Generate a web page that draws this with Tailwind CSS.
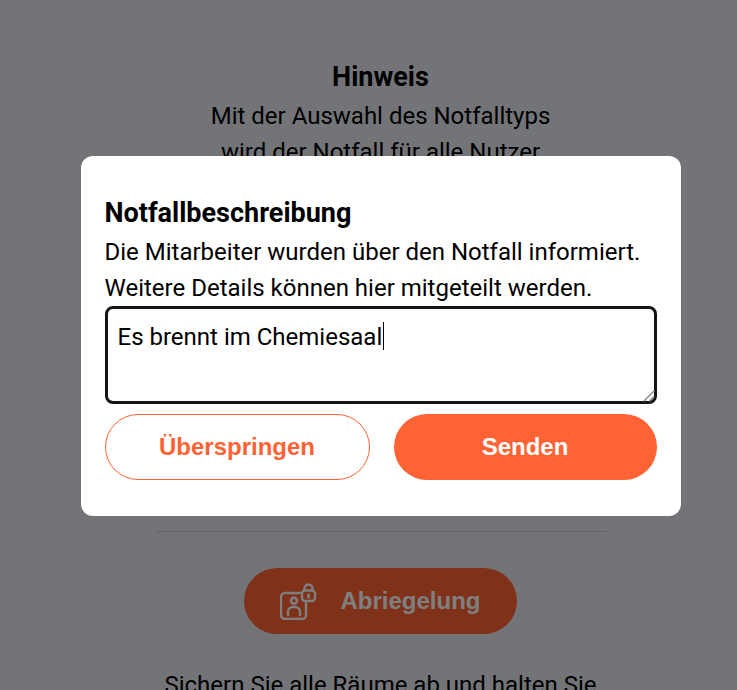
<!DOCTYPE html>
<html lang="de">
<head>
<meta charset="utf-8">
<script src="https://cdn.jsdelivr.net/npm/@tailwindcss/browser@4"></script>
</head>
<body class="m-0 bg-[#e6e9ee] font-['Roboto',sans-serif] text-black">
<div class="relative h-[690px] w-[737px] overflow-hidden">
  <main class="flex w-[761px] flex-col items-center pt-[59px] text-center">
    <h2 class="text-[27px] leading-[36px] font-bold">Hinweis</h2>
    <p class="mt-[3px] text-[24px] leading-[36px]">Mit der Auswahl des Notfalltyps</p>
    <p class="text-[24px] leading-[36px]">wird der Notfall für alle Nutzer</p>
    <div class="mt-[361px] h-px w-[450px] bg-[#c8c8c8]"></div>
    <button class="mt-[36px] flex h-[66px] w-[273px] items-center justify-center gap-[23px] rounded-full bg-[#ff6233] font-['Liberation_Sans',sans-serif] text-[24px] font-bold text-white">
      <svg class="h-[37px] w-[37px]" viewBox="0 0 37 37" fill="none" stroke="currentColor" stroke-width="2.4" stroke-linecap="round" stroke-linejoin="round">
        <path d="M20 10H5a4 4 0 0 0-4 4v18a4 4 0 0 0 4 4h17a4 4 0 0 0 4-4V20"/>
        <circle cx="14" cy="17.7" r="3"/>
        <path d="M8 32v-3a5 5 0 0 1 5-5h2a5 5 0 0 1 5 5v3"/>
        <rect x="22" y="7.5" width="13" height="10.5" rx="3"/>
        <path d="M24.5 7.5V5.5a4 4 0 0 1 8 0v2"/>
        <circle cx="28.5" cy="12" r="1.3" fill="currentColor" stroke="none"/>
        <path d="M28.5 12v2.6"/>
      </svg>
      <span>Abriegelung</span>
    </button>
    <p class="mt-[33px] text-[24px] leading-[36px] whitespace-nowrap">Sichern Sie alle Räume ab und halten Sie</p>
  </main>

  <div class="absolute top-0 left-0 flex h-[690px] w-[761px] items-start justify-center bg-black/50 pt-[156px]">
    <section class="flex h-[360px] w-[600px] flex-col rounded-[12px] bg-white px-[24px] pt-[39px]">
      <h2 class="text-[27px] leading-[36px] font-bold">Notfallbeschreibung</h2>
      <p class="mt-[3px] text-[24px] leading-[36px]">Die Mitarbeiter wurden über den Notfall informiert.</p>
      <p class="text-[24px] leading-[36px]">Weitere Details können hier mitgeteilt werden.</p>
      <div class="relative h-[98px] w-full">
        <textarea class="block h-full w-full resize-none rounded-[8px] border-[3px] border-[#141414] bg-white px-[10px] py-[10px] font-['Roboto',sans-serif] text-[24px] leading-[36px] outline-none">Es brennt im Chemiesaal</textarea>
        <span class="absolute top-[16px] left-[278px] h-[28px] w-px bg-black"></span>
        <svg class="absolute top-[84px] left-[538px] h-[12px] w-[12px]" viewBox="0 0 12 12" fill="none" stroke="#8a8a8a" stroke-width="1.4" stroke-linecap="round">
          <path d="M1 11 11 1"/>
          <path d="M6.5 11 11 6.5"/>
        </svg>
      </div>
      <div class="mt-[10px] flex gap-[24px]">
        <button class="h-[66px] w-[265px] rounded-full border border-[#ff6233] bg-white font-['Liberation_Sans',sans-serif] text-[24px] font-bold text-[#ff6233]">Überspringen</button>
        <button class="h-[66px] w-[263px] rounded-full bg-[#ff6233] font-['Liberation_Sans',sans-serif] text-[24px] font-bold text-white">Senden</button>
      </div>
    </section>
  </div>
</div>
</body>
</html>
